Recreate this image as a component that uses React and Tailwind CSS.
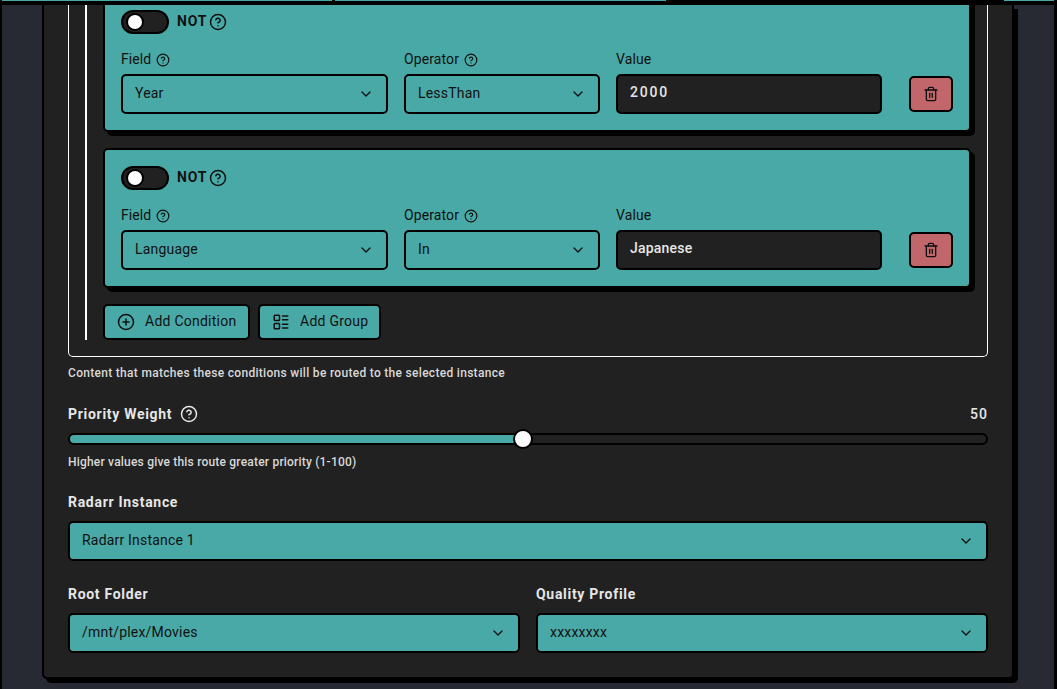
import React from 'react';
import { ChevronDown, CirclePlus, CircleHelp, LayoutList, Trash2 } from 'lucide-react';

const font = 'font-["Roboto",sans-serif]';

const Select = ({ value, className = '' }) => (
    <div className={`flex h-10 items-center justify-between rounded-[5px] border-2 border-black bg-[#48a9a6] px-3 text-sm tracking-[0.2px] text-[#111] ${className}`}>
        <span className="pb-0.5">{value}</span>
        <ChevronDown className="h-4 w-4" strokeWidth={2} />
    </div>
);

const FieldLabel = ({ text, help }) => (
    <div className="mb-1 flex h-5 items-center gap-[5px] text-sm tracking-[0.1px] text-[#111]">
        <span className="pb-0.5">{text}</span>
        {help && <CircleHelp className="h-3.5 w-3.5" strokeWidth={2} />}
    </div>
);

const Condition = ({ field, operator, value, valueClass, className = '' }) => (
    <div className={`rounded-[5px] border-2 border-black bg-[#48a9a6] p-4 shadow-[4px_4px_0_0_#000] ${className}`}>
        <div className="flex h-6 items-center">
            <div className="flex h-6 w-12 items-center rounded-full border-2 border-black bg-[#212121] pl-[5px]">
                <div className="h-3.5 w-3.5 rounded-full bg-white ring-2 ring-black" />
            </div>
            <span className="ml-2 pb-0.5 text-sm font-bold tracking-[0.8px] text-[#111]">NOT</span>
            <CircleHelp className="ml-0.5 h-[18px] w-[18px] text-[#111]" strokeWidth={2} />
        </div>
        <div className="mt-4 flex items-end gap-4">
            <div className="w-[267px]">
                <FieldLabel text="Field" help />
                <Select value={field} />
            </div>
            <div className="w-[196px]">
                <FieldLabel text="Operator" help />
                <Select value={operator} />
            </div>
            <div className="w-[266px]">
                <FieldLabel text="Value" />
                <div className={`flex h-10 items-center rounded-[5px] border-2 border-black bg-[#212121] px-3 pb-1 text-sm font-medium text-[#e6e6e6] ${valueClass}`}>
                    {value}
                </div>
            </div>
            <button className="mb-0.5 ml-[11px] flex h-9 w-11 items-center justify-center rounded-[5px] border-2 border-black bg-[#c1666b] text-[#111]">
                <Trash2 className="h-4 w-4" strokeWidth={2} />
            </button>
        </div>
    </div>
);

const Heading = ({ children }) => (
    <div className="text-sm font-bold tracking-[0.7px] text-[#e6e6e6]">{children}</div>
);

export default function App() {
    return (
        <div className={`flex h-screen flex-col overflow-hidden bg-black pr-[3px] ${font}`}>
            {/* clipped tab strip */}
            <div className="flex h-[5px] shrink-0 items-start bg-black pl-0.5">
                <div className="h-px w-[330px] bg-[#48a9a6]" />
                <div className="ml-[3px] h-px w-[331px] bg-[#48a9a6]" />
                <div className="ml-[338px] h-px w-[50px] bg-[#48a9a6]" />
            </div>

            <div className="min-h-0 flex-1 overflow-hidden border-l-2 border-black bg-[#272933] pl-10">
                <div className="w-[972px] rounded-b-[5px] border-x-2 border-b-2 border-black bg-[#212121] px-6 pb-6 shadow-[4px_4px_0_0_#000]">
                    <div className="rounded-b-[5px] border-x border-b border-white px-4 pb-4">
                        <div className="flex">
                            <div className="w-0.5 shrink-0 bg-white" />
                            <div className="min-w-0 flex-1 pl-4">
                                <Condition field="Year" operator="LessThan" value="2000" valueClass="tracking-[1.8px]" className="-mt-[13px]" />
                                <Condition field="Language" operator="In" value="Japanese" valueClass="tracking-[0.2px]" className="mt-4" />
                                <div className="mt-4 flex gap-2">
                                    <button className="flex h-9 w-[147px] items-center gap-2.5 rounded-[5px] border-2 border-black bg-[#48a9a6] pl-[12px] text-sm tracking-[0.25px] text-[#111]">
                                        <CirclePlus className="h-[18px] w-[18px]" strokeWidth={2} />
                                        <span className="pb-0.5">Add Condition</span>
                                    </button>
                                    <button className="flex h-9 w-[123px] items-center gap-2.5 rounded-[5px] border-2 border-black bg-[#48a9a6] pl-[12px] text-sm tracking-[0.25px] text-[#111]">
                                        <LayoutList className="h-[18px] w-[18px]" strokeWidth={2} />
                                        <span className="pb-0.5">Add Group</span>
                                    </button>
                                </div>
                            </div>
                        </div>
                    </div>

                    <p className="mt-2 text-xs font-medium leading-4 tracking-[0.3px] text-[#d8d8d8]">
                        Content that matches these conditions will be routed to the selected instance
                    </p>

                    <div className="mt-[23px] flex h-5 items-center justify-between">
                        <div className="flex items-center gap-2">
                            <Heading>Priority Weight</Heading>
                            <CircleHelp className="h-[18px] w-[18px] text-[#e6e6e6]" strokeWidth={2} />
                        </div>
                        <span className="text-sm font-medium tracking-[1px] text-[#e6e6e6]">50</span>
                    </div>

                    <div className="relative mt-[9px] h-3 rounded-full border-2 border-black bg-[#212121]">
                        <div className="h-full w-[49.5%] rounded-l-full bg-[#48a9a6]" />
                        <div className="absolute left-[443px] top-1/2 h-5 w-5 -translate-y-1/2 rounded-full border-2 border-black bg-white" />
                    </div>

                    <p className="mt-[9px] text-xs font-medium leading-4 tracking-[0.2px] text-[#d8d8d8]">
                        Higher values give this route greater priority (1-100)
                    </p>

                    <div className="mb-[9px] mt-[22px]">
                        <Heading>Radarr Instance</Heading>
                    </div>
                    <Select value="Radarr Instance 1" />

                    <div className="mt-[23px] grid grid-cols-2 gap-4">
                        <div>
                            <div className="mb-[9px]">
                                <Heading>Root Folder</Heading>
                            </div>
                            <Select value="/mnt/plex/Movies" />
                        </div>
                        <div>
                            <div className="mb-[9px]">
                                <Heading>Quality Profile</Heading>
                            </div>
                            <Select value="xxxxxxxx" />
                        </div>
                    </div>
                </div>
            </div>
        </div>
    );
}
